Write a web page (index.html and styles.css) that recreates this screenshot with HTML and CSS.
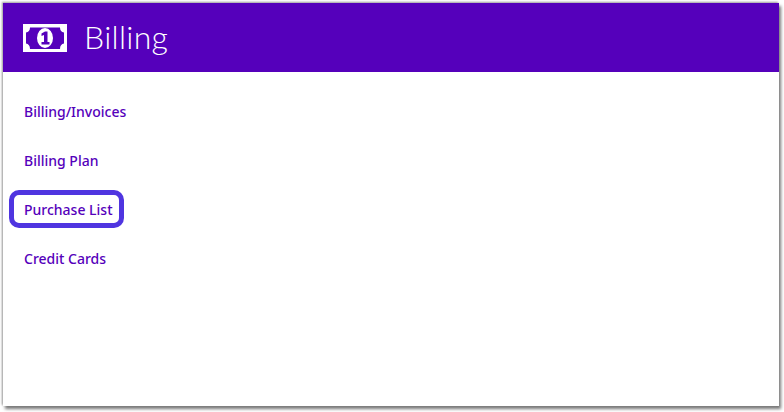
FILE: index.html
```html
<!DOCTYPE html>
<html>
<head>
	<title>Billing</title>
	<meta charset="utf-8">
	<link rel="stylesheet" href="styles.css">
</head>
<body>
<div class="panel">
	<div class="head">
		<svg class="bill" width="44" height="28" viewBox="0 0 44 28">
			<rect width="44" height="28" fill="#fff"/>
			<path d="M7 3.500H37C37 6.500 38.500 8 41 8.500V19.500C38.500 20 37 21.500 37 25H7C7 21.500 5.500 20 3 19.500V8.500C5.500 8 7 6.500 7 3.500Z" fill="#5500bb"/>
			<ellipse cx="22" cy="14" rx="8" ry="10" fill="#fff"/>
			<path d="M18.500 9.500L22 7.500H24.500V18H26.500V20.500H18.500V18H21V11L18.500 12Z" fill="#5500bb"/>
		</svg>
		<h1>Billing</h1>
	</div>
	<ul class="menu">
		<li><a href="javascript:;">Billing/Invoices</a></li>
		<li><a href="javascript:;">Billing Plan</a></li>
		<li><a class="on" href="javascript:;">Purchase List</a></li>
		<li><a href="javascript:;">Credit Cards</a></li>
	</ul>
</div>
</body>
</html>
```

FILE: styles.css
```css
html, body { height: 100%; }
body, ul, li, h1 { margin: 0; padding: 0; }
a { text-decoration: none; color: #5500bb; }
ul { list-style: none; }

body { box-sizing: border-box; padding: 3px 5px 6px 3px; background-color: #fff; }
.panel { height: 100%; background-color: #fff; box-shadow: -1px -1px 2px #999, 2px 3px 3px #777; }
.head { display: flex; align-items: center; gap: 17px; height: 69px; padding: 0 0 2px 20px; box-sizing: border-box; background-color: #5500bb; }
.bill { display: block; margin-top: 2px; }
.head h1 { font: 300 32px "Lato", "Liberation Sans", sans-serif; letter-spacing: 0.3px; color: #fff; }
.menu { padding: 30px 0 0 21px; font: 500 14px/19px "Noto Sans", "Open Sans", sans-serif; }
.menu li { display: flex; height: 49px; }
.menu a { height: 19px; }
.menu .on { box-sizing: border-box; height: 38px; margin: -10px 0 0 -15px; padding: 5px 6px 5px 10px; border: 5px solid #4f35e0; border-radius: 10px; }
```
